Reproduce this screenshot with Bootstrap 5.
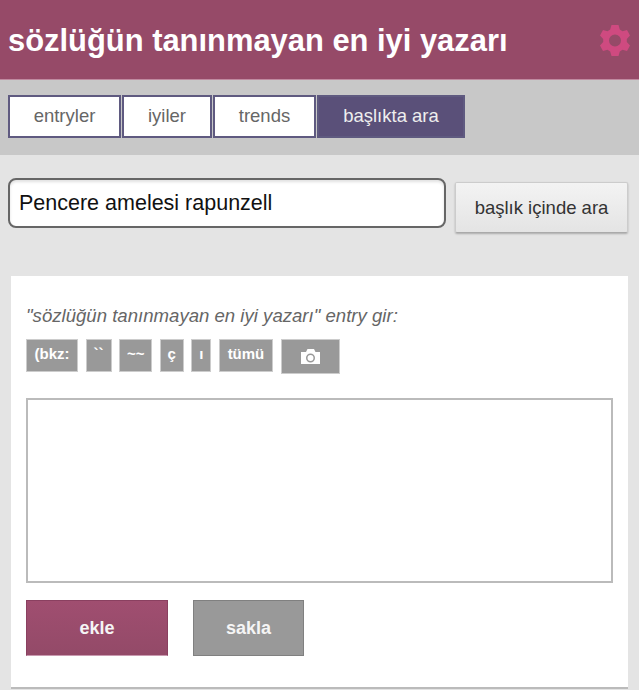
<!DOCTYPE html>
<html lang="tr">
<head>
    <meta charset="UTF-8">
    <title>sözlüğün tanınmayan en iyi yazarı</title>
    <link href="https://cdn.jsdelivr.net/npm/bootstrap@5.3.0/dist/css/bootstrap.min.css" rel="stylesheet">
    <style>
        body { background: #e4e4e4; font-family: "Liberation Sans", Arial, sans-serif; height: 690px; overflow: hidden; }
        .top-head { height: 80px; background: #964a68; border-bottom: 1px solid #c08aa0; padding: 0 9px 0 8px; }
        .top-head h1 { font-size: 30.9px; font-weight: 700; color: #fff; margin: 0; padding-top: 2px; }
        .tab-bar { height: 75px; background: #c8c8c8; padding: 15px 8px 0; }
        .tab-item { height: 43px; background: #fff; border: 2px solid #5f5a80; color: #666; font-size: 18.5px; line-height: 37px; text-align: center; text-decoration: none; margin-right: 1px; }
        .tab-item.on { background: #5a5079; color: #eee; }
        .search-row { padding: 23px 11px 0 8px; height: 121px; }
        .search-input { width: 438px; height: 50px; border: 2px solid #666; border-radius: 8px; background: #fff; font-size: 21.5px; color: #111; padding: 1px 9px 0; box-shadow: inset 0 2px 3px rgba(0,0,0,.12); outline: 0; }
        .search-btn { width: 173px; height: 51px; margin-top: 4px; background: linear-gradient(#f3f3f3, #e4e4e4); border: 1px solid #ccc; border-bottom-color: #aaa; border-radius: 2px; box-shadow: 0 1px 2px rgba(0,0,0,.25); color: #333; font-size: 18.5px; padding: 0; }
        .entry-box { margin-left: 11px; width: 617px; height: 413px; background: #fff; border-bottom: 2px solid #bbb; padding: 29px 15px 0; }
        .entry-label { font-size: 18.6px; font-style: italic; color: #666; line-height: 21px; margin-bottom: 13px; }
        .tool-row { gap: 7.6px; height: 59px; }
        .tool-btn { height: 33px; background: #999; border: 1px solid #ccc; border-radius: 0; color: #fff; font-size: 15px; font-weight: 700; padding: 0 0 2px; text-align: center; }
        .tool-cam { height: 35px; width: 59px; padding: 0; }
        .entry-text { display: block; width: 587px; height: 185px; border: 2px solid #bbb; border-radius: 0; outline: 0; resize: none; margin-bottom: 17px; }
        .act-row { gap: 25px; }
        .act-btn { height: 56px; border-radius: 0; color: #f5f5f5; font-size: 18px; font-weight: 700; padding: 0; }
        .act-add { width: 142px; background: linear-gradient(#a04e70, #934a68); border: 1px solid #8a4060; border-bottom-color: #c99ab0; }
        .act-hide { width: 111px; background: #999; border: 1px solid #808080; }
    </style>
</head>
<body>

    <header class="top-head d-flex align-items-center justify-content-between">
        <h1>sözlüğün tanınmayan en iyi yazarı</h1>
        <svg width="30" height="32" viewBox="0 0 30 32" aria-hidden="true">
            <path fill="#cf4a80" fill-rule="evenodd" d="M11.5 1 H18.5 L19.8 5.6 L22.5 7.2 L27 6 L30 11.6 L26.8 15 V18 L30 21.4 L27 27 L22.5 25.8 L19.8 27.4 L18.5 32 H11.5 L10.2 27.4 L7.5 25.8 L3 27 L0 21.4 L3.2 18 V15 L0 11.6 L3 6 L7.5 7.2 L10.2 5.6 Z M15 10.5 A6 6 0 1 0 15 22.5 A6 6 0 1 0 15 10.5 Z"/>
        </svg>
    </header>

    <nav class="tab-bar d-flex">
        <a href="#" class="tab-item" style="width: 113px">entryler</a>
        <a href="#" class="tab-item" style="width: 90px">iyiler</a>
        <a href="#" class="tab-item" style="width: 103px">trends</a>
        <a href="#" class="tab-item on" style="width: 148px">başlıkta ara</a>
    </nav>

    <form class="search-row d-flex justify-content-between align-items-start">
        <input type="text" class="search-input" value="Pencere amelesi rapunzell">
        <button type="button" class="btn search-btn">başlık içinde ara</button>
    </form>

    <section class="entry-box">
        <div class="entry-label">"sözlüğün tanınmayan en iyi yazarı" entry gir:</div>
        <div class="tool-row d-flex align-items-start">
            <button type="button" class="btn tool-btn" style="width: 52px">(bkz:</button>
            <button type="button" class="btn tool-btn" style="width: 26px">``</button>
            <button type="button" class="btn tool-btn" style="width: 33px">~~</button>
            <button type="button" class="btn tool-btn" style="width: 24px">ç</button>
            <button type="button" class="btn tool-btn" style="width: 20px">ı</button>
            <button type="button" class="btn tool-btn" style="width: 54px">tümü</button>
            <button type="button" class="btn tool-btn tool-cam d-flex align-items-center justify-content-center" aria-label="fotoğraf">
                <svg width="19" height="15" viewBox="0 0 19 15" aria-hidden="true">
                    <path fill="#fff" fill-rule="evenodd" d="M0 3 H5 L6.5 0 H13 L14.5 3 H19 V15 H0 Z M9.5 4.5 A4.5 4.5 0 1 0 9.5 13.5 A4.5 4.5 0 1 0 9.5 4.5 Z M9.5 6 A3 3 0 1 1 9.5 12 A3 3 0 1 1 9.5 6 Z"/>
                </svg>
            </button>
        </div>
        <textarea class="entry-text"></textarea>
        <div class="act-row d-flex">
            <button type="button" class="btn act-btn act-add">ekle</button>
            <button type="button" class="btn act-btn act-hide">sakla</button>
        </div>
    </section>

</body>
</html>
